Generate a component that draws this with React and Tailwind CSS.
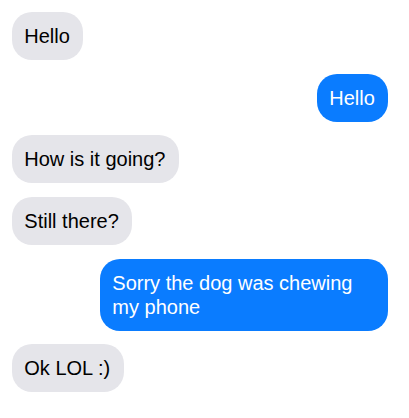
const messages = [
  { id: 1, text: 'Hello', mine: false },
  { id: 2, text: 'Hello', mine: true },
  { id: 3, text: 'How is it going?', mine: false },
  { id: 4, text: 'Still there?', mine: false },
  { id: 5, text: 'Sorry the dog was chewing my phone', mine: true },
  { id: 6, text: 'Ok LOL :)', mine: false },
];

function Bubble({ text, mine }) {
  return (
    <div
      className={`max-w-[288px] rounded-[20px] py-3 pl-3 pr-[13.5px] text-[20px] leading-6 ${
        mine ? 'self-end bg-[#0a7cff] text-white' : 'self-start bg-[#e5e5ea] text-black'
      }`}
    >
      {text}
    </div>
  );
}

export default function App() {
  return (
    <div
      className="flex min-h-[418px] w-full flex-col gap-[13.6px] bg-white pt-[12.3px] pl-[12.3px] pr-[20.7px]"
      style={{ fontFamily: '"Liberation Sans", Arial, sans-serif' }}
    >
      {messages.map((m) => (
        <Bubble key={m.id} text={m.text} mine={m.mine} />
      ))}
    </div>
  );
}
